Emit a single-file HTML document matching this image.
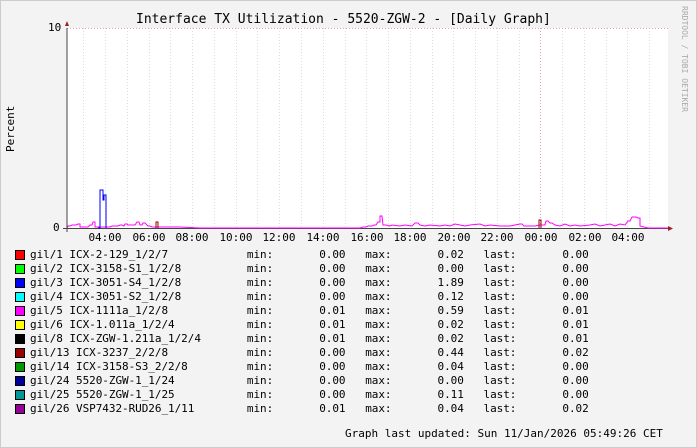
<!DOCTYPE html>
<html><head><meta charset="utf-8"><style>
body{margin:0;width:697px;height:448px;background:#f3f3f3;overflow:hidden;font-family:"DejaVu Sans Mono","Liberation Mono",monospace;color:#000;position:relative}
.t{position:absolute;white-space:pre;font-size:11px}
.x{position:absolute;top:231px;width:40px;margin-left:-20px;text-align:center;font-size:11px}
pre{position:absolute;left:30px;top:248px;margin:0;font-family:"DejaVu Sans Mono","Liberation Mono",monospace;font-size:11px;line-height:14px;letter-spacing:-0.05px}
.sw{position:absolute;left:15px;width:8px;height:8px;border:1px solid #000}
</style></head><body>
<div style="position:absolute;left:0;top:0;width:695px;height:446px;border:1px solid #ccc"></div>
<div class="t" style="left:136px;top:12px;font-size:13px">Interface TX Utilization - 5520-ZGW-2 - [Daily Graph]</div>
<div class="t" style="left:680px;top:6px;font-size:8px;color:#aaa;writing-mode:vertical-rl">RRDTOOL / TOBI OETIKER</div>
<div class="t" style="left:4px;top:152px;transform:rotate(-90deg);transform-origin:left top;">Percent</div>
<svg style="position:absolute;left:0;top:0" width="697" height="448">
<rect x="67" y="28" width="601" height="200" fill="#fff"/>
<g stroke="#ddd" stroke-dasharray="1,2">
<path d="M83.5 28V228M105.5 28V228M127.5 28V228M149.5 28V228M170.5 28V228M192.5 28V228M214.5 28V228M236.5 28V228M257.5 28V228M279.5 28V228M301.5 28V228M323.5 28V228M345.5 28V228M366.5 28V228M388.5 28V228M410.5 28V228M432.5 28V228M453.5 28V228M475.5 28V228M497.5 28V228M519.5 28V228M562.5 28V228M584.5 28V228M606.5 28V228M627.5 28V228M649.5 28V228"/>
</g>
<path d="M540.5 28V228" stroke="#e8a0a0" stroke-dasharray="1,2"/>
<path d="M67 28.5H668" stroke="#e8a0a0" stroke-dasharray="1,2"/>
<path d="M67 228.5H668" stroke="#444"/>
<path d="M67 228L68 226L70 226L72 225L74 225L76 225L78 224L80 224L80 227L82 227L84 227L86 227L88 227L90 225L92 225L93 222L95 222L95 227L100 227L104 227L110 227L112 226L114 226L116 226L118 226L120 225L122 225L124 226L125 224L127 224L128 225L130 225L133 225L135 225L137 222L139 222L140 225L142 225L143 223L145 223L147 225L148 226L150 226L152 227L160 227L170 227L180 227L200 228L360 228L363 227L366 227L368 226L370 226L372 226L374 225L376 225L378 222L380 222L380 216L382 216L383 225L386 225L390 226L392 225L400 226L405 225L412 226L415 223L418 223L420 225L425 226L430 225L440 226L445 225L450 226L455 224L460 225L465 226L470 225L480 224L485 226L490 225L500 226L510 226L515 225L520 224L522 224L524 226L535 226L540 225L545 225L546 221L548 221L550 223L552 223L555 225L560 226L565 224L570 226L575 225L580 226L590 225L595 224L600 226L605 225L610 224L615 226L620 224L625 225L628 221L630 221L632 217L636 217L638 218L640 218L640 226L648 228L668 228" fill="none" stroke="#f0f" stroke-width="1"/>
<path d="M98 228L100 228L100 190L103 190L103 200L104 200L104 195L106 195L106 228" fill="none" stroke="#00f"/>
<path d="M156 228V222H158V228M539 228V220H541V228" fill="none" stroke="#900"/>
<path d="M67 28V232" stroke="#444"/>
<path d="M63 228.5H67" stroke="#444"/>
<path d="M65 26L67 21L69 26Z" fill="#922"/>
<path d="M668 226L673 228.5L668 231Z" fill="#922"/>
</svg>
<div class="t" style="left:48px;top:21px">10</div>
<div class="t" style="left:53px;top:221px">0</div>
<div class="x" style="left:105px">04:00</div>
<div class="x" style="left:149px">06:00</div>
<div class="x" style="left:192px">08:00</div>
<div class="x" style="left:236px">10:00</div>
<div class="x" style="left:279px">12:00</div>
<div class="x" style="left:323px">14:00</div>
<div class="x" style="left:367px">16:00</div>
<div class="x" style="left:410px">18:00</div>
<div class="x" style="left:454px">20:00</div>
<div class="x" style="left:497px">22:00</div>
<div class="x" style="left:541px">00:00</div>
<div class="x" style="left:585px">02:00</div>
<div class="x" style="left:628px">04:00</div>
<div class="sw" style="top:250px;background:#f00"></div>
<div class="sw" style="top:264px;background:#0f0"></div>
<div class="sw" style="top:278px;background:#00f"></div>
<div class="sw" style="top:292px;background:#0ff"></div>
<div class="sw" style="top:306px;background:#f0f"></div>
<div class="sw" style="top:320px;background:#ff0"></div>
<div class="sw" style="top:334px;background:#000"></div>
<div class="sw" style="top:348px;background:#900"></div>
<div class="sw" style="top:362px;background:#090"></div>
<div class="sw" style="top:376px;background:#009"></div>
<div class="sw" style="top:390px;background:#099"></div>
<div class="sw" style="top:404px;background:#909"></div>
<pre>gil/1 ICX-2-129_1/2/7            min:       0.00   max:       0.02   last:       0.00
gil/2 ICX-3158-S1_1/2/8          min:       0.00   max:       0.00   last:       0.00
gil/3 ICX-3051-S4_1/2/8          min:       0.00   max:       1.89   last:       0.00
gil/4 ICX-3051-S2_1/2/8          min:       0.00   max:       0.12   last:       0.00
gil/5 ICX-1111a_1/2/8            min:       0.01   max:       0.59   last:       0.01
gil/6 ICX-1.011a_1/2/4           min:       0.01   max:       0.02   last:       0.01
gil/8 ICX-ZGW-1.211a_1/2/4       min:       0.01   max:       0.02   last:       0.01
gil/13 ICX-3237_2/2/8            min:       0.00   max:       0.44   last:       0.02
gil/14 ICX-3158-S3_2/2/8         min:       0.00   max:       0.04   last:       0.00
gil/24 5520-ZGW-1_1/24           min:       0.00   max:       0.00   last:       0.00
gil/25 5520-ZGW-1_1/25           min:       0.00   max:       0.11   last:       0.00
gil/26 VSP7432-RUD26_1/11        min:       0.01   max:       0.04   last:       0.02</pre>
<div class="t" style="left:345px;top:427px">Graph last updated: Sun 11/Jan/2026 05:49:26 CET</div>
</body></html>
